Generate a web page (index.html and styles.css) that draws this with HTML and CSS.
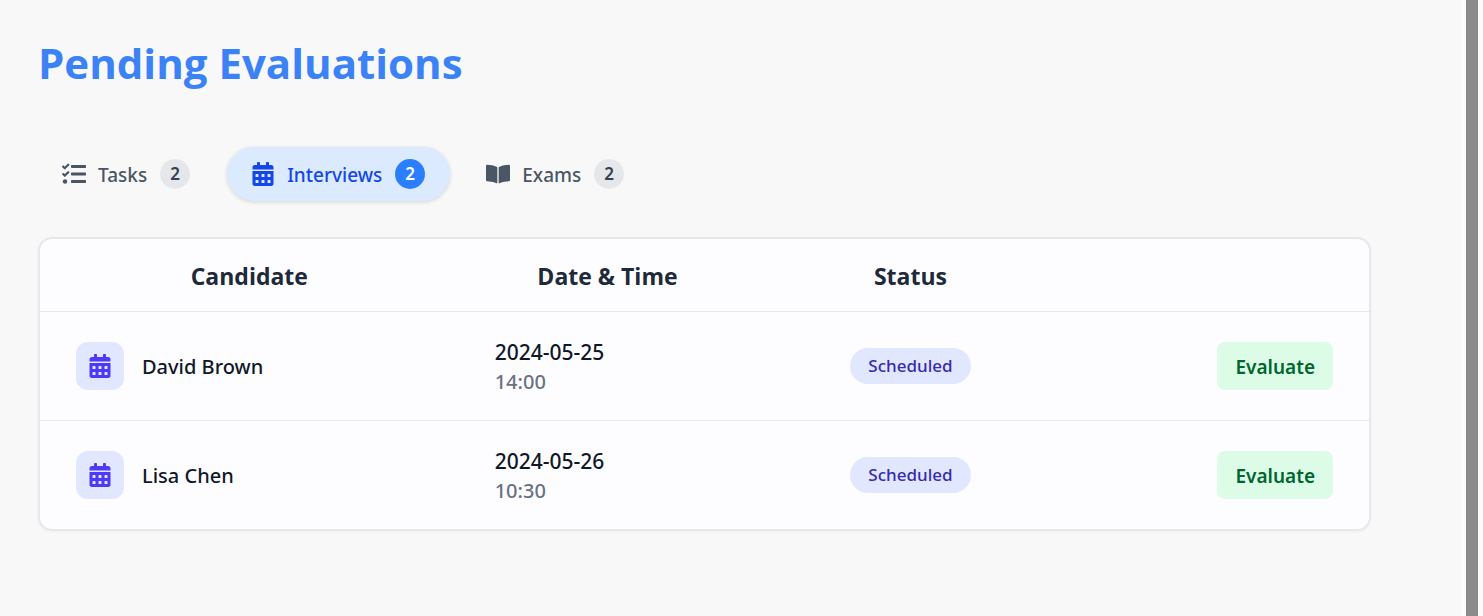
FILE: index.html
```html
<!DOCTYPE html>
<html lang="en">
<head>
<meta charset="utf-8">
<meta name="viewport" content="width=device-width, initial-scale=1">
<title>Pending Evaluations</title>
<link rel="stylesheet" href="styles.css">
</head>
<body>
<svg class="sprite" aria-hidden="true">
  <symbol id="icon-tasks" viewBox="0 0 512 512">
    <path d="M139.610 35.500a12 12 0 0 0-17 0L58.930 98.810l-22.700-22.120a12 12 0 0 0-17 0L3.530 92.410a12 12 0 0 0 0 17l47.590 47.400a12.780 12.780 0 0 0 17.610 0l15.590-15.620L156.520 69a12.090 12.090 0 0 0 .09-17zm0 159.190a12 12 0 0 0-17 0l-63.680 63.720-22.700-22.100a12 12 0 0 0-17 0L3.530 252a12 12 0 0 0 0 17L51 316.500a12.770 12.770 0 0 0 17.600 0l15.700-15.690 72.200-72.220a12 12 0 0 0 .09-16.900zM64 368c-26.490 0-48.590 21.500-48.590 48S37.530 464 64 464a48 48 0 0 0 0-96zm432 16H208a16 16 0 0 0-16 16v32a16 16 0 0 0 16 16h288a16 16 0 0 0 16-16v-32a16 16 0 0 0-16-16zm0-320H208a16 16 0 0 0-16 16v32a16 16 0 0 0 16 16h288a16 16 0 0 0 16-16V80a16 16 0 0 0-16-16zm0 160H208a16 16 0 0 0-16 16v32a16 16 0 0 0 16 16h288a16 16 0 0 0 16-16v-32a16 16 0 0 0-16-16z"/>
  </symbol>
  <symbol id="icon-calendar" viewBox="0 0 448 512">
    <path fill-rule="evenodd" d="M0 464c0 26.500 21.500 48 48 48h352c26.500 0 48-21.500 48-48V192H0v272zM320 268c0-6.600 5.400-12 12-12h40c6.600 0 12 5.400 12 12v40c0 6.600-5.400 12-12 12h-40c-6.600 0-12-5.400-12-12v-40zm0 128c0-6.600 5.400-12 12-12h40c6.600 0 12 5.400 12 12v40c0 6.600-5.400 12-12 12h-40c-6.600 0-12-5.400-12-12v-40zM192 268c0-6.600 5.400-12 12-12h40c6.600 0 12 5.400 12 12v40c0 6.600-5.400 12-12 12h-40c-6.600 0-12-5.400-12-12v-40zm0 128c0-6.600 5.400-12 12-12h40c6.600 0 12 5.400 12 12v40c0 6.600-5.400 12-12 12h-40c-6.600 0-12-5.400-12-12v-40zM64 268c0-6.600 5.400-12 12-12h40c6.600 0 12 5.400 12 12v40c0 6.600-5.400 12-12 12H76c-6.600 0-12-5.400-12-12v-40zm0 128c0-6.600 5.400-12 12-12h40c6.600 0 12 5.400 12 12v40c0 6.600-5.400 12-12 12H76c-6.600 0-12-5.400-12-12v-40zM400 64h-48V16c0-8.800-7.200-16-16-16h-32c-8.800 0-16 7.200-16 16v48H160V16c0-8.800-7.200-16-16-16h-32c-8.800 0-16 7.200-16 16v48H48C21.500 64 0 85.500 0 112v48h448v-48c0-26.500-21.500-48-48-48z"/>
  </symbol>
  <symbol id="icon-book" viewBox="0 0 576 512">
    <path d="M542.220 32.050c-54.800 3.110-163.720 14.430-230.960 55.590-4.640 2.840-7.270 7.890-7.270 13.170v363.870c0 11.550 12.630 18.850 23.280 13.490 69.180-34.820 169.230-44.320 218.700-46.920 16.890-.89 30.020-14.430 30.020-30.660V62.750c.01-17.710-15.350-31.740-33.770-30.700zM264.730 87.640C197.500 46.480 88.580 35.170 33.780 32.050 15.360 31.010 0 45.040 0 62.750V400.600c0 16.240 13.130 29.780 30.020 30.660 49.490 2.600 149.590 12.110 218.770 46.950 10.620 5.350 23.210-1.940 23.210-13.460V100.630c0-5.290-2.620-10.140-7.270-12.990z"/>
  </symbol>
</svg>
<main class="page">
  <h1 class="title">Pending Evaluations</h1>
  <nav class="tabs" aria-label="Evaluation type">
    <button class="tab" type="button"><svg class="icon" aria-hidden="true"><use href="#icon-tasks"/></svg><span class="label">Tasks</span><span class="count">2</span></button>
    <button class="tab tab-active" type="button" aria-current="true"><svg class="icon" aria-hidden="true"><use href="#icon-calendar"/></svg><span class="label">Interviews</span><span class="count">2</span></button>
    <button class="tab" type="button"><svg class="icon" aria-hidden="true"><use href="#icon-book"/></svg><span class="label">Exams</span><span class="count">2</span></button>
  </nav>
  <div class="card">
    <table class="table">
      <colgroup><col class="col-candidate"><col class="col-date"><col class="col-status"><col></colgroup>
      <thead>
        <tr><th scope="col">Candidate</th><th scope="col">Date &amp; Time</th><th scope="col">Status</th><td></td></tr>
      </thead>
      <tbody>
        <tr>
          <td><div class="candidate"><span class="tile"><svg class="icon" aria-hidden="true"><use href="#icon-calendar"/></svg></span><span class="label">David Brown</span></div></td>
          <td class="when"><div class="date">2024-05-25</div><div class="time">14:00</div></td>
          <td class="status"><span class="pill">Scheduled</span></td>
          <td class="action"><button class="evaluate" type="button">Evaluate</button></td>
        </tr>
        <tr>
          <td><div class="candidate"><span class="tile"><svg class="icon" aria-hidden="true"><use href="#icon-calendar"/></svg></span><span class="label">Lisa Chen</span></div></td>
          <td class="when"><div class="date">2024-05-26</div><div class="time">10:30</div></td>
          <td class="status"><span class="pill">Scheduled</span></td>
          <td class="action"><button class="evaluate" type="button">Evaluate</button></td>
        </tr>
      </tbody>
    </table>
  </div>
</main>
<div class="scroll-track" aria-hidden="true"><div class="scroll-thumb"></div></div>
</body>
</html>
```
FILE: styles.css
```css
* { box-sizing: border-box; }

body {
  margin: 0;
  min-height: 100vh;
  display: flex;
  background: #f8f8f8;
  color: #101828;
  font-family: "Segoe UI", "Noto Sans", "Open Sans", sans-serif;
  font-size: 20px;
  line-height: 30px;
  font-weight: 500;
}

button { font: inherit; border: 0; cursor: pointer; }

.sprite { position: absolute; width: 0; height: 0; }

.page { flex: 1; padding: 36px 90px 36px 38px; }

.title {
  margin: 0 0 57px;
  color: #3b82f6;
  font-family: "Segoe UI", "Open Sans", "Noto Sans", sans-serif;
  font-size: 42px;
  line-height: 54px;
  font-weight: 700;
}

.tabs { display: flex; gap: 12px; margin-bottom: 36px; }

.tab {
  display: flex;
  align-items: center;
  gap: 12px;
  height: 54px;
  padding: 0 25px 0 24px;
  border-radius: 27px;
  background: transparent;
  color: #4a5565;
  font-size: 19px;
}

.tab-active {
  background: #dbeafe;
  color: #1447e6;
  box-shadow: 0 1px 4px rgba(0, 0, 0, 0.15);
}

.label { padding-top: 2px; }

.tab .label { padding-right: 1px; }

.icon { width: 24px; height: 24px; fill: currentColor; }

.count {
  width: 30px;
  height: 30px;
  border-radius: 50%;
  background: #e5e7eb;
  color: #364153;
  font-size: 17px;
  font-weight: 600;
  text-align: center;
}

.tab-active .count { background: #2b7fff; color: #fff; }

.card {
  overflow: hidden;
  border: 2px solid #e7e8ea;
  border-radius: 14px;
  background: #fdfdff;
  box-shadow: 0 1px 3px rgba(0, 0, 0, 0.04);
}

.table { width: 100%; table-layout: fixed; border-collapse: separate; border-spacing: 0; }

.col-candidate { width: 31.5%; }
.col-date { width: 22.4%; }
.col-status { width: 23.2%; }

th {
  padding: 19px 36px 17px;
  color: #1e2939;
  font-family: "Segoe UI", "Open Sans", "Noto Sans", sans-serif;
  font-size: 23px;
  line-height: 36px;
  font-weight: 700;
}

td { padding: 24px 36px; }

thead td { padding: 0; }

thead th, thead td, tbody tr:not(:last-child) td { border-bottom: 1px solid #e7e8ea; }

.candidate { display: flex; align-items: center; gap: 18px; }

.tile {
  display: grid;
  place-items: center;
  width: 48px;
  height: 48px;
  border-radius: 12px;
  background: #e0e7ff;
  color: #4f39f6;
}

.when { padding: 25px 36px 23px; }

.date { font-size: 21px; }

.time { color: #6a7282; }

.status { text-align: center; }

.pill {
  display: inline-block;
  padding: 3px 18px;
  border-radius: 18px;
  background: #e0e7ff;
  color: #372aac;
  font-size: 17px;
}

.action { text-align: right; }

.evaluate {
  height: 48px;
  padding: 2px 18px 0;
  border-radius: 8px;
  background: #dcfce7;
  color: #016630;
  font-size: 19px;
  font-weight: 600;
}

.scroll-track { width: 22px; padding: 0 5px; background: #fcfcfc; display: flex; }

.scroll-thumb { flex: 1; background: #8b8b8b; }
```
